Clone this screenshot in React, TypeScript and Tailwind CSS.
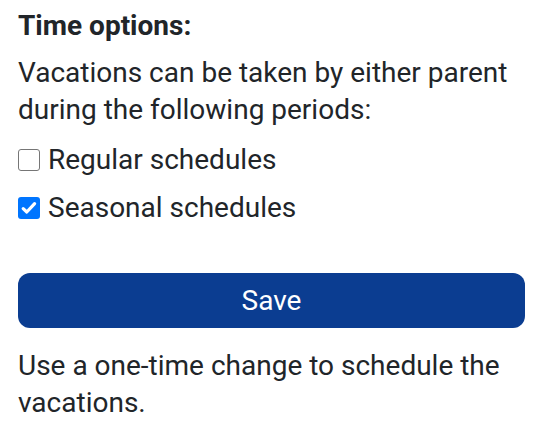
import React, { useState } from 'react';

const Box = ({ checked, onClick }: { checked: boolean; onClick: () => void }) => (
  <span
    onClick={onClick}
    className={
      checked
        ? "flex items-center justify-center w-[22px] h-[22px] rounded-[3px] bg-[#0075ff] shrink-0"
        : "flex items-center justify-center w-[22px] h-[22px] rounded-[3px] border-[1.5px] border-[#767676] bg-white shrink-0"
    }
  >
    {checked && (
      <svg width="18" height="18" viewBox="0 0 18 18" fill="none">
        <path d="M3.2 9.6l3.6 3.4L14.6 4.6" stroke="white" strokeWidth="3.2" strokeLinecap="round" strokeLinejoin="round" />
      </svg>
    )}
  </span>
);

export default function App() {
  const [regular, setRegular] = useState(false);
  const [seasonal, setSeasonal] = useState(true);

  const options = [
    { label: 'Regular schedules', value: regular, toggle: () => setRegular(!regular) },
    { label: 'Seasonal schedules', value: seasonal, toggle: () => setSeasonal(!seasonal) },
  ];

  return (
    <div className="min-h-screen bg-white px-[18px] pt-[7px] text-[#212529] font-['Roboto',sans-serif]">
      <h2 className="text-[28px] leading-[37px] font-bold">Time options:</h2>
      <p className="mt-[10px] text-[28px] leading-[37px]">
        Vacations can be taken by either parent during the following periods:
      </p>
      <div className="mt-[13px] flex flex-col gap-[11px]">
        {options.map((o) => (
          <label key={o.label} className="flex items-center gap-[8px] text-[28px] leading-[37px] cursor-pointer">
            <Box checked={o.value} onClick={o.toggle} />
            {o.label}
          </label>
        ))}
      </div>
      <button className="mt-[47px] w-full h-[55px] rounded-[12px] bg-[#0b3d91] text-white text-[28px] font-normal">
        Save
      </button>
      <p className="mt-[19px] text-[28px] leading-[37px]">
        Use a one-time change to schedule the vacations.
      </p>
    </div>
  );
}
